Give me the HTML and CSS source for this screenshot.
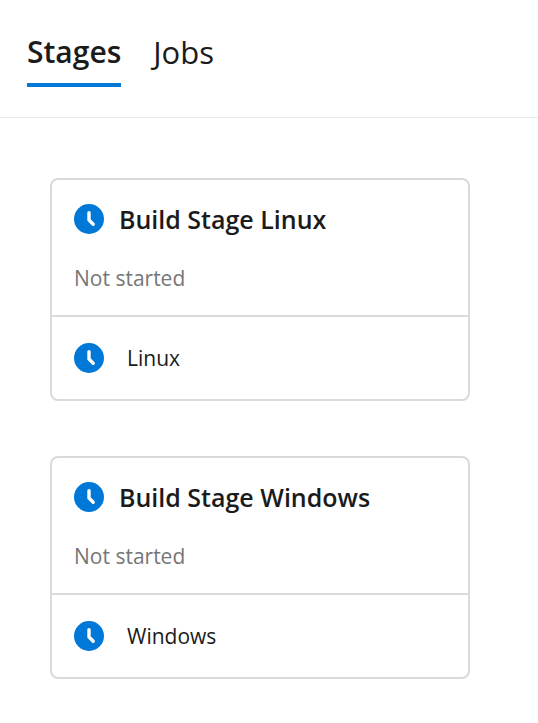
FILE: index.html
```html
<!DOCTYPE html>
<html lang="en">
<head>
<meta charset="utf-8">
<meta name="viewport" content="width=device-width, initial-scale=1">
<title>Stages</title>
<link rel="stylesheet" href="styles.css">
</head>
<body>
<svg class="defs" aria-hidden="true">
  <symbol id="clock" viewBox="0 0 30 30">
    <circle cx="15" cy="15" r="15" fill="#0078d7"/>
    <path d="M15 8.6v7.4L19.2 20.2" fill="none" stroke="#fff" stroke-width="3.4" stroke-linecap="round" stroke-linejoin="round"/>
  </symbol>
</svg>
<header class="tabs" role="tablist">
  <button class="tab selected" type="button" role="tab" aria-selected="true">Stages</button>
  <button class="tab" type="button" role="tab" aria-selected="false">Jobs</button>
</header>
<main class="stages">
  <section class="card">
    <div class="summary">
      <h2 class="title"><svg class="icon" aria-hidden="true"><use href="#clock"/></svg><span>Build Stage Linux</span></h2>
      <p class="status">Not started</p>
    </div>
    <div class="job"><svg class="icon" aria-hidden="true"><use href="#clock"/></svg><span>Linux</span></div>
  </section>
  <section class="card">
    <div class="summary">
      <h2 class="title"><svg class="icon" aria-hidden="true"><use href="#clock"/></svg><span>Build Stage Windows</span></h2>
      <p class="status">Not started</p>
    </div>
    <div class="job"><svg class="icon" aria-hidden="true"><use href="#clock"/></svg><span>Windows</span></div>
  </section>
</main>
</body>
</html>
```
FILE: styles.css
```css
* { box-sizing: border-box; }
body {
  margin: 0;
  background: #fff;
  color: #1b1b1b;
  font-family: "Open Sans", "Noto Sans", sans-serif;
}
.defs { display: none; }
.tabs {
  display: flex;
  gap: 32px;
  padding: 20px 27px 30px;
  border-bottom: 1px solid #eaeaea;
}
.tab {
  padding: 12px 0 11px;
  border: 0;
  border-bottom: 4px solid transparent;
  background: none;
  color: inherit;
  font-family: inherit;
  font-size: 31px;
  line-height: 40px;
}
.selected {
  border-bottom-color: #0078d7;
  font-size: 30px;
  font-weight: 600;
}
.stages {
  display: flex;
  flex-direction: column;
  gap: 55px;
  padding: 60px 68px 44px 50px;
}
.card {
  border: 2px solid #dadada;
  border-radius: 8px;
}
.summary {
  padding: 21px 22px;
  border-bottom: 2px solid #dadada;
}
.title {
  display: flex;
  align-items: center;
  gap: 15px;
  margin: 0 0 25px;
  font-size: 25px;
  font-weight: 550;
  line-height: 36px;
}
.icon {
  flex: none;
  width: 30px;
  height: 30px;
}
.status {
  margin: 0;
  color: #767676;
  font-size: 21px;
  line-height: 32px;
}
.job {
  display: flex;
  align-items: center;
  gap: 23px;
  padding: 25px 22px;
  font-size: 21px;
  line-height: 32px;
}
```
